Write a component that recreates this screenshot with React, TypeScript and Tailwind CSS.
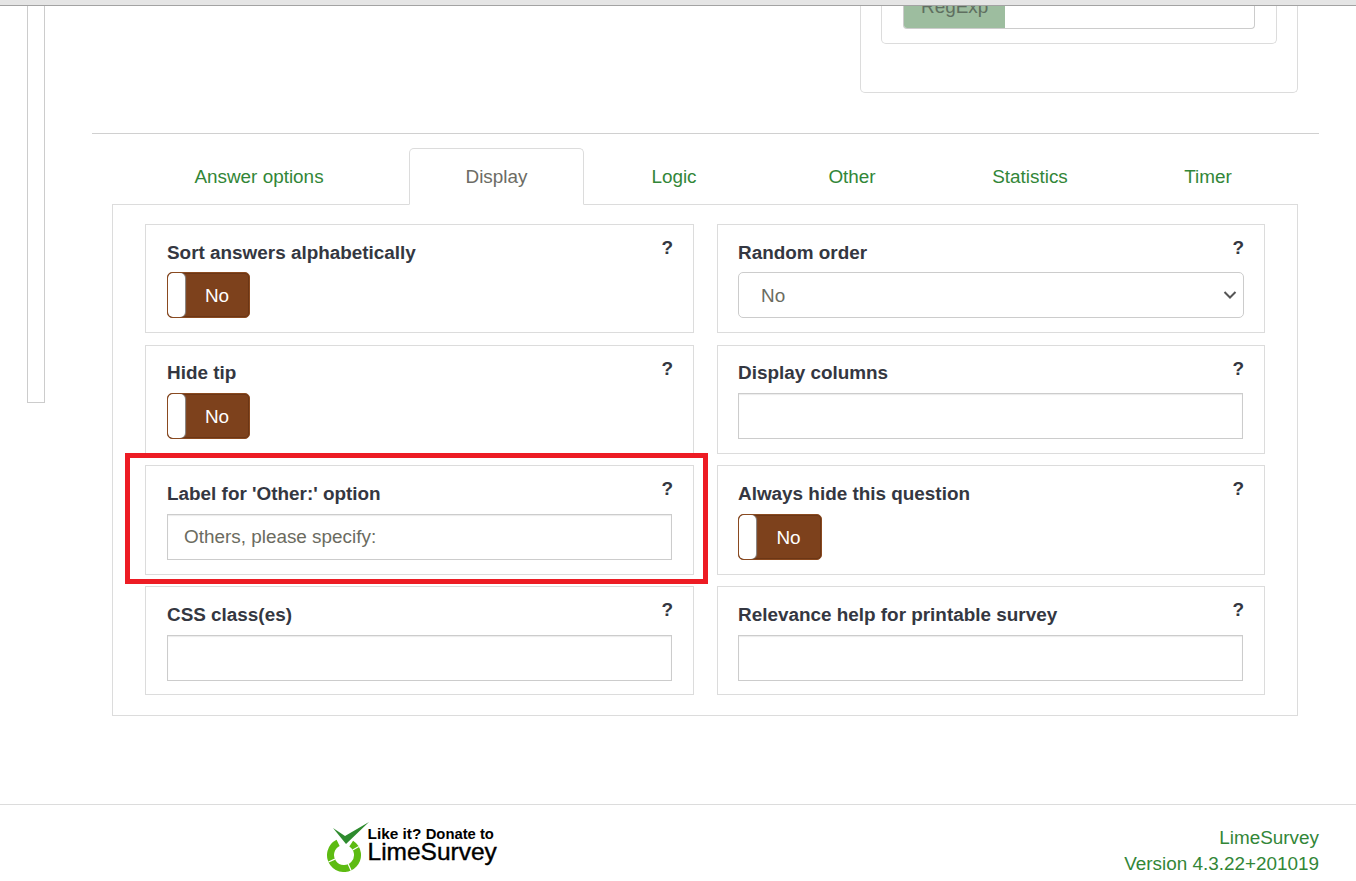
import React from "react";

const font = { fontFamily: '"Liberation Sans", Arial, sans-serif' };

function Toggle({ wide }: { wide?: boolean }) {
  return (
    <div className={`flex h-[46px] overflow-hidden rounded-[5px] border border-[#8a4a20] bg-[#7d411c] shadow-[inset_0_0_0_1px_#6b3616] ${wide ? "w-[84px]" : "w-[83px]"}`}>
      <div className="h-full w-[17px] rounded-[5px] bg-white shadow-[1px_0_1px_#8f8f8f]" />
      <div className="flex flex-1 items-center justify-center pt-[3px] text-[18.9px] text-white">No</div>
    </div>
  );
}

function TextBox({ value }: { value?: string }) {
  return (
    <div className="flex h-[46px] w-full items-center border border-[#cccccc] pl-[16px] text-[18.9px] text-[#6b6b60] shadow-[inset_0_1px_1px_rgba(0,0,0,0.08)]">
      {value}
    </div>
  );
}

function Card({ label, children, h, right, top = "pt-[15px]", gap = "mb-[7px]" }: { label: string; children: React.ReactNode; h: string; right?: boolean; top?: string; gap?: string }) {
  return (
    <div className={`relative border border-[#dcdcdc] ${top} ${right ? "pl-[20px] pr-[21px]" : "px-[21px]"} ${h}`}>
      <div className={`${gap} h-[26px] text-[18.9px] font-bold leading-[26px] text-[#343741]`}>{label}</div>
      <span className="absolute right-[20px] top-[10px] text-[19px] font-bold leading-[26px] text-[#343741]">?</span>
      {children}
    </div>
  );
}

function Tab({ label, w, active }: { label: string; w: string; active?: boolean }) {
  return active ? (
    <div className={`relative z-10 -mb-px ml-[2px] flex h-[57px] ${w} items-center justify-center rounded-t-[5px] border border-b-white border-[#dcdcdc] bg-white pt-[1px] text-[18.9px] text-[#6c6c64]`}>
      {label}
    </div>
  ) : (
    <div className={`flex h-[56px] ${w} items-center justify-center pt-[3px] text-[18.9px] text-[#328637]`}>{label}</div>
  );
}

function Logo() {
  return (
    <div className="flex h-[52px] w-[175px] items-start">
      <svg width="44" height="50" viewBox="0 0 44 50" className="shrink-0">
        <path d="M8 6 L20 14 L44 0 L21 22 Z" fill="#2e8b2e" />
        <path d="M13.1 20.9 A13.5 13.5 0 1 0 26.2 21.6" fill="none" stroke="#5dbb12" strokeWidth="7" />
        <path d="M27.7 28 L33.8 24.5 M9.9 37.1 L3.5 40 M23.2 42.1 L26.1 48.5" stroke="#ffffff" strokeWidth="1.2" />
      </svg>
      <div className="-ml-[1.5px] text-black">
        <div className="mt-[6px] h-[12px] whitespace-nowrap text-[15.4px] font-bold leading-[12px]">
          Like it? <span className="text-[14.8px]">Donate to</span>
        </div>
        <div className="h-[24px] whitespace-nowrap text-[24.5px] leading-[24px] [-webkit-text-stroke:0.4px_black]">LimeSurvey</div>
      </div>
    </div>
  );
}

export default function App() {
  return (
    <div className="relative h-[881px] w-[1356px] overflow-hidden bg-white" style={font}>
      <div className="h-[6px] border-b border-[#a3a3a3] bg-[#e5e5e5]" />
      <div className="flex h-[798px]">
        <div className="ml-[27px] h-[397px] w-[18px] border-x border-b border-[#cccccc]" />
        <div className="ml-[47px] w-[1227px]">
          <div className="h-[128px] border-b border-[#d0d0d0]">
            <div className="ml-[768px] h-[87px] w-[438px] rounded-b-[5px] border-x border-b border-[#dcdcdc] px-[20px]">
              <div className="h-[38px] rounded-b-[5px] border-x border-b border-[#dcdcdc] px-[21px]">
                <div className="flex h-[23px] overflow-hidden rounded-b-[4px] border-x border-b border-[#cccccc]">
                  <div className="relative h-full w-[101px] overflow-hidden bg-[#9dbd9f] text-[18.9px] text-[#5f6f60]">
                    <span className="absolute left-[17px] top-[-12px] leading-[26px]">RegExp</span>
                  </div>
                </div>
              </div>
            </div>
          </div>
          <div className="ml-[20px] mt-[14px] w-[1186px]">
            <div className="flex items-end">
              <Tab label="Answer options" w="w-[295px] pr-[1px]" />
              <Tab label="Display" w="w-[175px]" active />
              <Tab label="Logic" w="w-[179px] pl-[1px]" />
              <Tab label="Other" w="w-[178px]" />
              <Tab label="Statistics" w="w-[178px]" />
              <Tab label="Timer" w="w-[178px]" />
            </div>
            <div className="h-[512px] border border-[#dcdcdc] pl-[32px] pr-[32px] pt-[19px]">
              <div className="grid grid-cols-[549px_548px] gap-x-[23px]">
                <div className="flex flex-col">
                  <Card label="Sort answers alphabetically" gap="mb-[6px]" h="h-[109px] mb-[12px]"><Toggle /></Card>
                  <Card label="Hide tip" top="pt-[14px]" h="h-[109px] mb-[11px]"><Toggle /></Card>
                  <Card label="Label for 'Other:' option" h="h-[110px] mb-[11px]"><TextBox value="Others, please specify:" /></Card>
                  <Card label="CSS class(es)" h="h-[109px]"><TextBox /></Card>
                </div>
                <div className="flex flex-col">
                  <Card right label="Random order" gap="mb-[6px]" h="h-[109px] mb-[12px]">
                    <div className="flex h-[46px] w-[506px] items-center justify-between rounded-[5px] border border-[#cccccc] pl-[22px] pr-[6px] text-[18.9px] text-[#6b6b60]">
                      <span className="pt-[2px]">No</span>
                      <svg width="14" height="8" viewBox="0 0 14 8" fill="none" stroke="#555555" strokeWidth="2"><path d="M1.5 1 L7 6.5 L12.5 1" /></svg>
                    </div>
                  </Card>
                  <Card right label="Display columns" top="pt-[14px]" h="h-[109px] mb-[11px]"><TextBox /></Card>
                  <Card right label="Always hide this question" h="h-[110px] mb-[11px]"><Toggle wide /></Card>
                  <Card right label="Relevance help for printable survey" h="h-[109px]"><TextBox /></Card>
                </div>
              </div>
            </div>
          </div>
        </div>
      </div>
      <div className="flex h-[77px] border-t border-[#dcdcdc] pr-[37px]">
        <div className="ml-[325px] mt-[17px]"><Logo /></div>
        <div className="ml-auto mt-[20px] text-right text-[18.9px] leading-[26px] text-[#328637]">
          <div>LimeSurvey</div>
          <div>Version 4.3.22+201019</div>
        </div>
      </div>
      <div className="absolute left-[125px] top-[453px] h-[131px] w-[583px] border-[5px] border-[#ed1c24]" />
    </div>
  );
}
